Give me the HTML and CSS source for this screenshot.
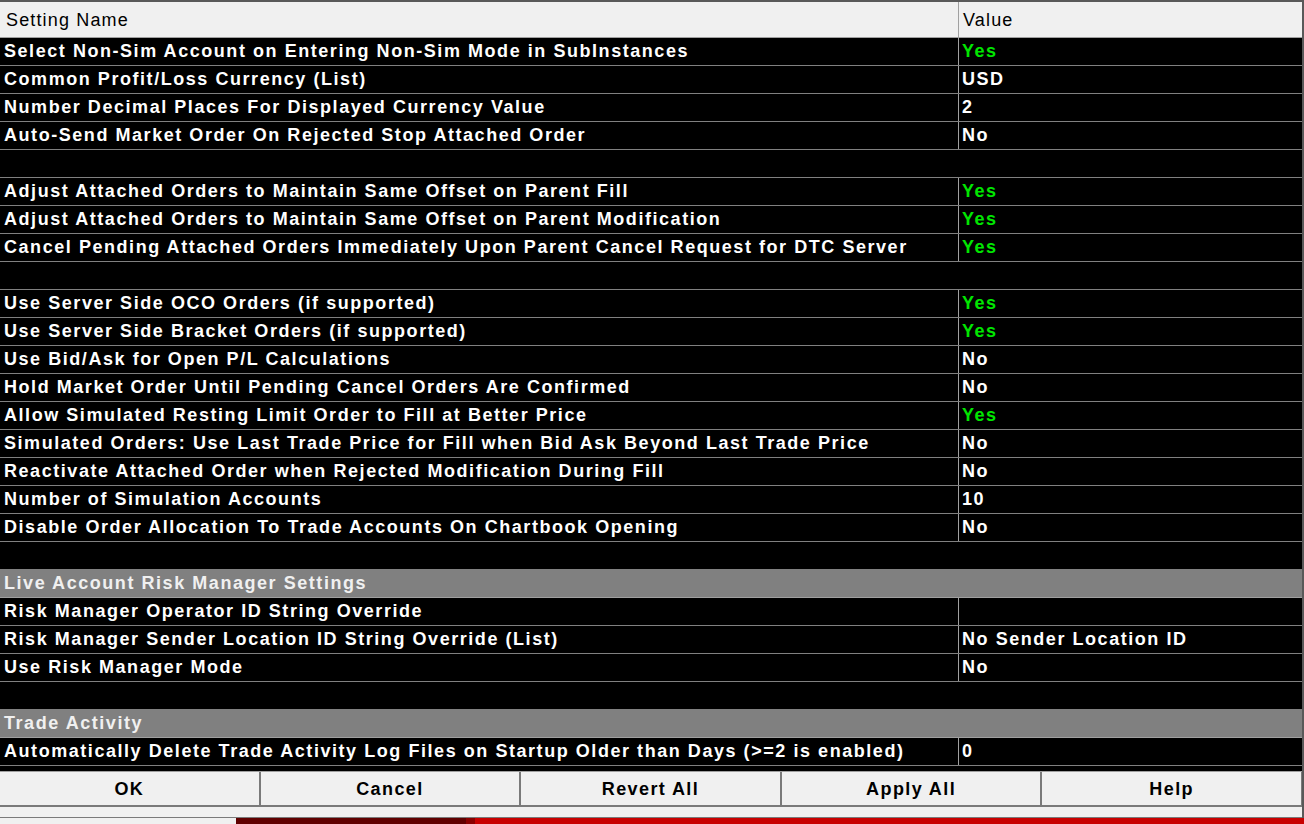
FILE: index.html
```
<!DOCTYPE html>
<html>
<head>
<meta charset="utf-8">
<link rel="stylesheet" href="styles.css">
</head>
<body>
<div class="window">
  <div class="grid">
    <div class="row head"><div class="name">Setting Name</div><div class="val">Value</div></div>
    <div class="row"><div class="name">Select Non-Sim Account on Entering Non-Sim Mode in SubInstances</div><div class="val yes">Yes</div></div>
    <div class="row"><div class="name">Common Profit/Loss Currency (List)</div><div class="val">USD</div></div>
    <div class="row"><div class="name">Number Decimal Places For Displayed Currency Value</div><div class="val">2</div></div>
    <div class="row"><div class="name">Auto-Send Market Order On Rejected Stop Attached Order</div><div class="val">No</div></div>
    <div class="row blank"></div>
    <div class="row"><div class="name">Adjust Attached Orders to Maintain Same Offset on Parent Fill</div><div class="val yes">Yes</div></div>
    <div class="row"><div class="name">Adjust Attached Orders to Maintain Same Offset on Parent Modification</div><div class="val yes">Yes</div></div>
    <div class="row"><div class="name">Cancel Pending Attached Orders Immediately Upon Parent Cancel Request for DTC Server</div><div class="val yes">Yes</div></div>
    <div class="row blank"></div>
    <div class="row"><div class="name">Use Server Side OCO Orders (if supported)</div><div class="val yes">Yes</div></div>
    <div class="row"><div class="name">Use Server Side Bracket Orders (if supported)</div><div class="val yes">Yes</div></div>
    <div class="row"><div class="name">Use Bid/Ask for Open P/L Calculations</div><div class="val">No</div></div>
    <div class="row"><div class="name">Hold Market Order Until Pending Cancel Orders Are Confirmed</div><div class="val">No</div></div>
    <div class="row"><div class="name">Allow Simulated Resting Limit Order to Fill at Better Price</div><div class="val yes">Yes</div></div>
    <div class="row"><div class="name">Simulated Orders: Use Last Trade Price for Fill when Bid Ask Beyond Last Trade Price</div><div class="val">No</div></div>
    <div class="row"><div class="name">Reactivate Attached Order when Rejected Modification During Fill</div><div class="val">No</div></div>
    <div class="row"><div class="name">Number of Simulation Accounts</div><div class="val">10</div></div>
    <div class="row"><div class="name">Disable Order Allocation To Trade Accounts On Chartbook Opening</div><div class="val">No</div></div>
    <div class="row blank"></div>
    <div class="row section">Live Account Risk Manager Settings</div>
    <div class="row"><div class="name">Risk Manager Operator ID String Override</div><div class="val"></div></div>
    <div class="row"><div class="name">Risk Manager Sender Location ID String Override (List)</div><div class="val">No Sender Location ID</div></div>
    <div class="row"><div class="name">Use Risk Manager Mode</div><div class="val">No</div></div>
    <div class="row blank"></div>
    <div class="row section">Trade Activity</div>
    <div class="row"><div class="name">Automatically Delete Trade Activity Log Files on Startup Older than Days (&gt;=2 is enabled)</div><div class="val">0</div></div>
  </div>
  <div class="buttons">
    <div class="btn">OK</div>
    <div class="btn">Cancel</div>
    <div class="btn">Revert All</div>
    <div class="btn">Apply All</div>
    <div class="btn">Help</div>
  </div>
  <div class="gap"></div>
</div>
<div class="taskbar">
  <div class="tb-light"></div>
  <div class="tb-dark"></div>
  <div class="tb-mid"></div>
  <div class="tb-red"></div>
</div>
</body>
</html>
```
FILE: styles.css
```
html, body {
  margin: 0;
  padding: 0;
  background: #f0f0f0;
  width: 1304px;
  height: 824px;
  overflow: hidden;
  font-family: "Liberation Sans", Arial, sans-serif;
}
.window {
  width: 1302px;
  border-right: 2px solid #595959;
  border-top: 2px solid #595959;
}
.grid {
  background: #000;
  height: 769px;
}
.row {
  display: flex;
  height: 27px;
  border-bottom: 1px solid #808080;
  color: #fff;
  font-weight: bold;
  font-size: 18px;
  letter-spacing: 1.55px;
  line-height: 27px;
}
.row .name {
  width: 959px;
  border-right: 1px solid #a0a0a0;
  padding-left: 4px;
  box-sizing: border-box;
  white-space: nowrap;
  overflow: hidden;
}
.row .val {
  flex: 1;
  padding-left: 3px;
  white-space: nowrap;
}
.row .val.yes {
  color: #00e600;
}
.row.head {
  height: 35px;
  line-height: 36px;
  background: #f0f0f0;
  color: #000;
  font-weight: normal;
  font-size: 18px;
  letter-spacing: 1.15px;
  border-bottom: 1px solid #a0a0a0;
}
.row.head .name {
  padding-left: 6px;
}
.row.head .val {
  padding-left: 4px;
}
.row.blank {
  background: #000;
}
.row.section {
  background: #808080;
  color: #f0f0f0;
  padding-left: 4px;
  border-bottom: 1px solid #a0a0a0;
}
.buttons {
  display: flex;
  height: 35px;
  background: #f0f0f0;
  border-top: 1px solid #a0a0a0;
}
.btn {
  flex: 1;
  text-align: center;
  font-weight: bold;
  font-size: 18px;
  letter-spacing: 1.4px;
  line-height: 35px;
  color: #000;
  border-right: 2px solid #7a7a7a;
  border-bottom: 2px solid #7a7a7a;
  box-sizing: border-box;
}
.btn:last-child {
  border-right: 1px solid #7a7a7a;
}
.gap {
  height: 10px;
  background: #f0f0f0;
  border-bottom: 1px solid #7a7a7a;
}
.taskbar {
  display: flex;
  height: 8px;
}
.tb-light { width: 236px; background: #f0f0f0; }
.tb-dark { width: 230px; background: #600000; }
.tb-mid { width: 9px; background: #8a0000; }
.tb-red { flex: 1; background: #c80000; }
```
